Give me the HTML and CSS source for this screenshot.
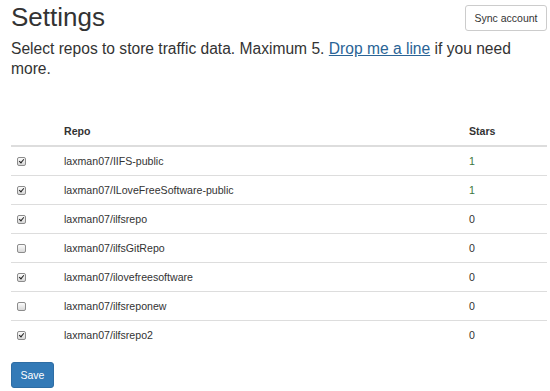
FILE: index.html
```html
<!DOCTYPE html>
<html lang="en">
<head>
<meta charset="utf-8">
<title>Settings</title>
<link rel="stylesheet" href="styles.css">
</head>
<body>
<div class="page">
  <div class="header">
    <h1 class="title">Settings</h1>
    <button class="btn btn-default" type="button">Sync account</button>
  </div>
  <p class="lead"><span>Select repos to store traffic data. Maximum 5. <a href="#" class="link">Drop me a line</a> if you need</span><br><span>more.</span></p>
  <table class="repos">
    <colgroup>
      <col class="col-check">
      <col class="col-repo">
      <col class="col-stars">
    </colgroup>
    <thead>
      <tr><th></th><th>Repo</th><th>Stars</th></tr>
    </thead>
    <tbody>
      <tr><td><input type="checkbox" class="cb" checked></td><td>laxman07/IIFS-public</td><td class="star-hit">1</td></tr>
      <tr><td><input type="checkbox" class="cb" checked></td><td>laxman07/ILoveFreeSoftware-public</td><td class="star-hit">1</td></tr>
      <tr><td><input type="checkbox" class="cb" checked></td><td>laxman07/ilfsrepo</td><td>0</td></tr>
      <tr><td><input type="checkbox" class="cb"></td><td>laxman07/ilfsGitRepo</td><td>0</td></tr>
      <tr><td><input type="checkbox" class="cb" checked></td><td>laxman07/ilovefreesoftware</td><td>0</td></tr>
      <tr><td><input type="checkbox" class="cb"></td><td>laxman07/ilfsreponew</td><td>0</td></tr>
      <tr><td><input type="checkbox" class="cb" checked></td><td>laxman07/ilfsrepo2</td><td>0</td></tr>
    </tbody>
  </table>
  <button class="btn btn-primary" type="button">Save</button>
</div>
</body>
</html>
```

FILE: styles.css
```css
html, body {
  margin: 0;
  padding: 0;
  background: #fff;
}
body {
  font-family: "Liberation Sans", Arial, sans-serif;
  color: #333;
}
.page {
  padding: 0 3px 0 11px;
}
.header {
  display: flex;
  justify-content: space-between;
  align-items: flex-start;
}
.title {
  margin: 3px 0 0 0;
  font-size: 26px;
  line-height: 1.1;
  font-weight: 500;
  color: #333;
}
.btn {
  font-family: "Liberation Sans", Arial, sans-serif;
  font-size: 10.5px;
  height: 26px;
  padding: 0 8.5px;
  border-radius: 3px;
  border: 1px solid #ccc;
  line-height: 24px;
  cursor: pointer;
}
.btn-default {
  margin-top: 5px;
  background: #fff;
  color: #333;
}
.btn-primary {
  margin-top: 13px;
  background: #337ab7;
  border-color: #2e6da4;
  color: #fff;
}
.lead {
  margin: 7.7px 0 0 0;
  font-size: 15.6px;
  line-height: 20px;
  color: #333;
}
.link {
  color: #2a6496;
  text-decoration: underline;
}
.repos {
  margin-top: 37.4px;
  width: 100%;
  table-layout: fixed;
  border-collapse: collapse;
  font-size: 10.6px;
}
.col-check { width: 47px; }
.col-stars { width: 84px; }
.repos th,
.repos td {
  padding: 6px;
  line-height: 16px;
  text-align: left;
  vertical-align: middle;
}
.repos th {
  font-weight: bold;
  border-bottom: 2px solid #ddd;
}
.repos tbody td {
  border-top: 1px solid #ddd;
}
.repos tbody tr:first-child td {
  border-top: 0;
}
.star-hit {
  color: #3c763d;
}
.cb {
  appearance: none;
  -webkit-appearance: none;
  display: inline-block;
  position: relative;
  width: 9px;
  height: 9px;
  margin: 0;
  vertical-align: -1px;
  border: 1px solid #8c8c8c;
  border-radius: 2px;
  background: linear-gradient(#fbfbfb, #d8d8d8);
  box-sizing: border-box;
}
.cb:checked::after {
  content: "";
  position: absolute;
  left: 2px;
  top: 0px;
  width: 2px;
  height: 4px;
  border-right: 1.7px solid #222;
  border-bottom: 1.7px solid #222;
  transform: rotate(40deg);
}
```
